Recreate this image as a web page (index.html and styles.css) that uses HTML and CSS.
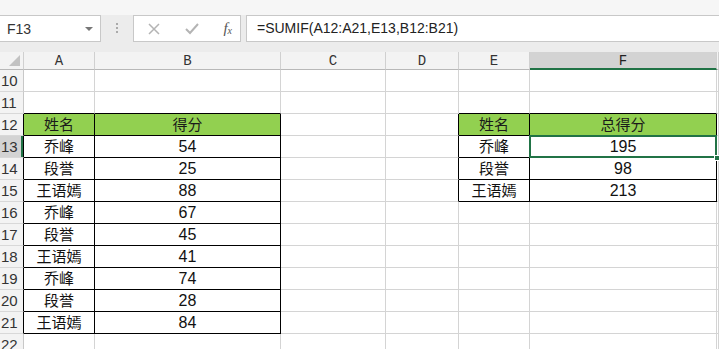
FILE: index.html
```html
<!DOCTYPE html>
<html>
<head>
    <title>SUMIF</title>
    <meta charset="utf-8">
    <link rel="stylesheet" href="styles.css">
</head>
<body>
    <div class="topstrip"></div>

    <div class="fbar">
        <div class="namebox">
            <span>F13</span>
            <span class="arrow"></span>
        </div>
        <div class="grip"></div>
        <div class="btnbox">
            <svg width="14" height="14" viewBox="0 0 14 14"><path d="M2 2 L12 12 M12 2 L2 12" stroke="#b4b4b4" stroke-width="1.5"/></svg>
            <svg width="16" height="14" viewBox="0 0 16 14"><path d="M2 7 L6 11 L14 2" stroke="#b4b4b4" stroke-width="2" fill="none"/></svg>
            <span class="fx">f<sub>x</sub></span>
        </div>
        <div class="formula">=SUMIF(A12:A21,E13,B12:B21)</div>
    </div>

    <div class="sheet">
        <!-- column headers -->
        <div class="ch corner"><span class="tri"></span></div>
        <div class="ch">A</div>
        <div class="ch">B</div>
        <div class="ch">C</div>
        <div class="ch">D</div>
        <div class="ch">E</div>
        <div class="ch sel">F</div>
        <div class="ch"></div>

        <!-- row 10 -->
        <div class="rh">10</div>
        <div class="c"></div><div class="c"></div><div class="c"></div><div class="c"></div><div class="c"></div><div class="c"></div><div class="c"></div>

        <!-- row 11 -->
        <div class="rh">11</div>
        <div class="c bb"></div><div class="c bb"></div><div class="c"></div><div class="c"></div><div class="c bb"></div><div class="c bb"></div><div class="c"></div>

        <!-- row 12 -->
        <div class="rh br">12</div>
        <div class="c t hd">姓名</div><div class="c t hd">得分</div><div class="c"></div><div class="c br"></div><div class="c t hd">姓名</div><div class="c t hd">总得分</div><div class="c"></div>

        <!-- row 13 -->
        <div class="rh br on">13</div>
        <div class="c t">乔峰</div><div class="c t n">54</div><div class="c"></div><div class="c br"></div><div class="c t">乔峰</div><div class="c t n active">195<span class="handle"></span></div><div class="c"></div>

        <!-- row 14 -->
        <div class="rh br">14</div>
        <div class="c t">段誉</div><div class="c t n">25</div><div class="c"></div><div class="c br"></div><div class="c t">段誉</div><div class="c t n">98</div><div class="c"></div>

        <!-- row 15 -->
        <div class="rh br">15</div>
        <div class="c t">王语嫣</div><div class="c t n">88</div><div class="c"></div><div class="c br"></div><div class="c t">王语嫣</div><div class="c t n">213</div><div class="c"></div>

        <!-- rows 16-21 -->
        <div class="rh br">16</div>
        <div class="c t">乔峰</div><div class="c t n">67</div><div class="c"></div><div class="c"></div><div class="c"></div><div class="c"></div><div class="c"></div>

        <div class="rh br">17</div>
        <div class="c t">段誉</div><div class="c t n">45</div><div class="c"></div><div class="c"></div><div class="c"></div><div class="c"></div><div class="c"></div>

        <div class="rh br">18</div>
        <div class="c t">王语嫣</div><div class="c t n">41</div><div class="c"></div><div class="c"></div><div class="c"></div><div class="c"></div><div class="c"></div>

        <div class="rh br">19</div>
        <div class="c t">乔峰</div><div class="c t n">74</div><div class="c"></div><div class="c"></div><div class="c"></div><div class="c"></div><div class="c"></div>

        <div class="rh br">20</div>
        <div class="c t">段誉</div><div class="c t n">28</div><div class="c"></div><div class="c"></div><div class="c"></div><div class="c"></div><div class="c"></div>

        <div class="rh br">21</div>
        <div class="c t">王语嫣</div><div class="c t n">84</div><div class="c"></div><div class="c"></div><div class="c"></div><div class="c"></div><div class="c"></div>

        <div class="rh">22</div>
        <div class="c"></div><div class="c"></div><div class="c"></div><div class="c"></div><div class="c"></div><div class="c"></div><div class="c"></div>
    </div>
</body>
</html>
```

FILE: styles.css
```css
* { box-sizing: border-box; }
body { margin: 0; background: #fff; font-family: "Liberation Sans", "Noto Sans CJK SC", sans-serif; overflow: hidden; }

.topstrip { height: 15px; background: #f6f6f6; }
.fbar { height: 37px; background: #ececec; display: flex; align-items: flex-start; }
.namebox { width: 101px; height: 27px; background: #fff; border: 1px solid #c8c8c8; border-left: none; display: flex; align-items: center; justify-content: space-between; padding: 0 7px 0 7px; font-size: 14px; color: #333; }
.arrow { width: 0; height: 0; border-left: 4px solid transparent; border-right: 4px solid transparent; border-top: 4px solid #777; }
.grip { width: 2px; height: 12px; margin: 8px 15px 0 15px; background: repeating-linear-gradient(#aaa 0 2px, transparent 2px 4px); }
.btnbox { width: 108px; height: 27px; background: #fff; border: 1px solid #c8c8c8; display: flex; align-items: center; justify-content: space-between; padding: 0 8px 0 13px; }
.fx { font-family: "Liberation Serif", serif; font-style: italic; font-size: 15px; color: #555; }
.fx sub { font-size: 10px; vertical-align: -1px; }
.formula { flex: 1; height: 27px; margin-left: 5px; background: #fff; border: 1px solid #c8c8c8; border-right: none; padding-left: 10px; line-height: 25px; font-size: 14px; color: #222; }

.sheet { display: grid; grid-template-columns: 24px 71px 186px 105px 73px 71px 187px 1fr; grid-template-rows: 18px; grid-auto-rows: 22px; }
.ch { background: #f3f3f3; border-right: 1px solid #d0d0d0; border-bottom: 1px solid #b8b8b8; font-family: "Liberation Mono", monospace; font-size: 14px; color: #333; text-align: center; line-height: 18px; }
.ch.sel { background: #d3d3d3; border-bottom: 2px solid #217346; color: #222; }
.corner { position: relative; }
.tri { position: absolute; right: 3px; bottom: 3px; width: 0; height: 0; border-left: 11px solid transparent; border-bottom: 11px solid #c2c2c2; }

.rh { background: #f3f3f3; border-right: 1px solid #c8c8c8; border-bottom: 1px solid #d8d8d8; font-size: 15px; color: #333; line-height: 22px; padding-left: 1px; }
.rh.on { background: #d3d3d3; border-right: 2px solid #217346; }

.c { border-right: 1px solid #d4d4d4; border-bottom: 1px solid #d4d4d4; text-align: center; line-height: 21px; font-size: 15px; color: #111; }
.c.t { border-right-color: #000; border-bottom-color: #000; }
.c.bb { border-bottom-color: #000; }
.c.br, .rh.br { border-right-color: #000; }
.rh.br.on { border-right: 1px solid #000; box-shadow: inset -2px 0 0 #217346; }
.c.hd { background: #92d050; color: #1a1a1a; }
.c.n { font-size: 16px; }

.active { position: relative; }
.active::after { content: ""; position: absolute; left: -1px; top: -1px; right: -1px; bottom: -1px; border: 2px solid #217346; }
.handle { position: absolute; right: -4px; bottom: -4px; width: 6px; height: 6px; background: #217346; border: 1px solid #fff; z-index: 1; }
```
